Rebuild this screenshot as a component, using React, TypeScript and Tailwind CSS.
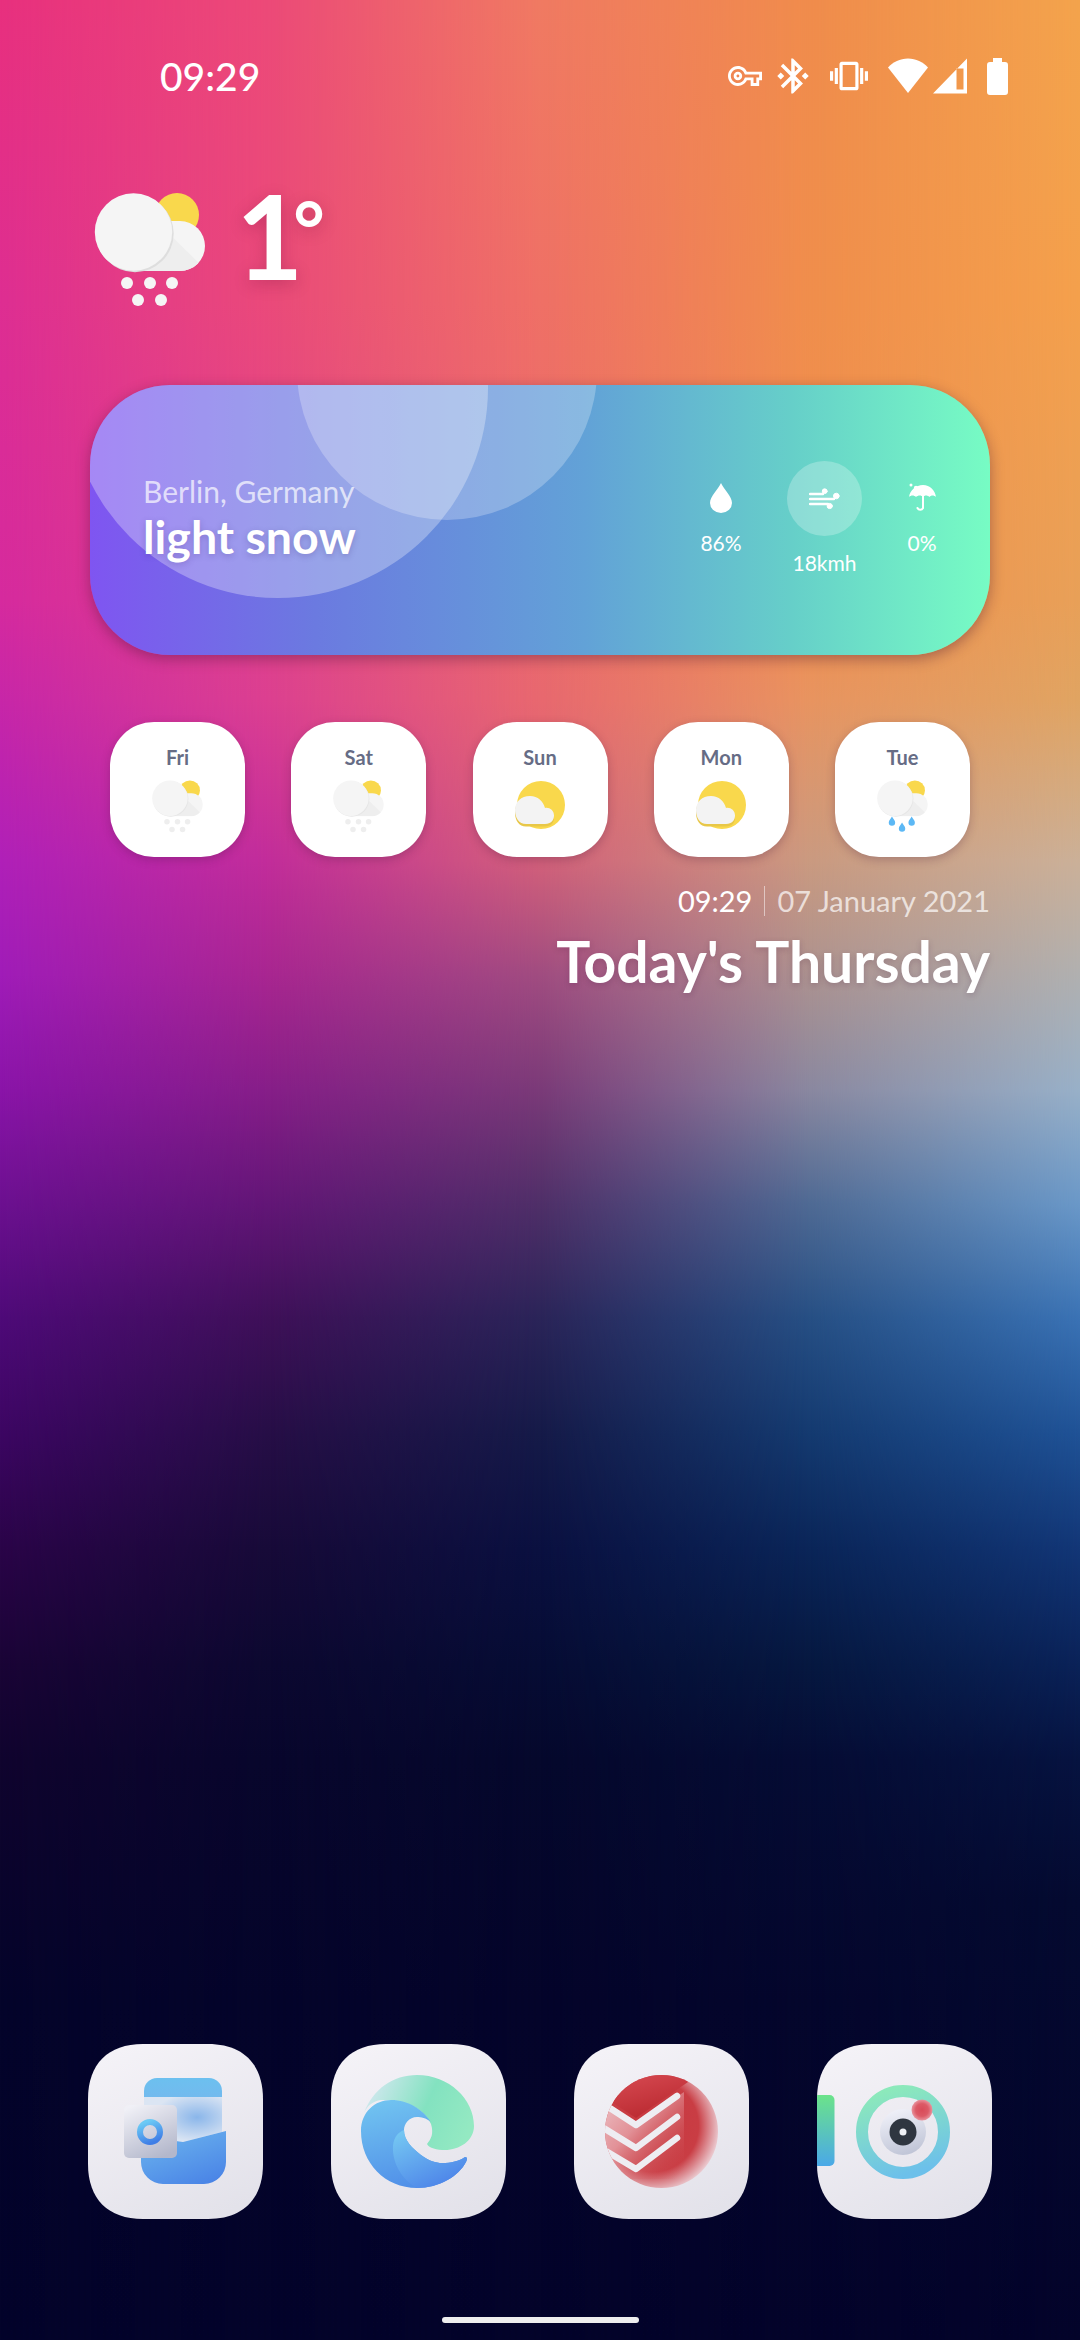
import React from "react";

function CloudIcon({ size, kind }: { size: number; kind: "main" | "snow" | "rain" }) {
  const id = kind;
  const main = kind === "main";
  const dot = main ? "#f5f5f5" : "#eeeeee";
  return (
    <svg width={size} height={size} viewBox="0 0 120 120" className="block overflow-visible">
      <defs>
        <clipPath id={`c-${id}`}>
          <path d="M43 81 H90 A25 25 0 0 0 90 31 H43 Z" />
        </clipPath>
      </defs>
      <circle cx="87" cy="25" r="22" fill="#f9d84c" />
      <path d="M43 81 H90 A25 25 0 0 0 90 31 H60 Z" fill="#f5f5f5" />
      <path d="M66 31 L112 76 L108 81 H50 Z" fill="#eeeeee" clipPath={`url(#c-${id})`} />
      <circle cx="45" cy="43.5" r="38.7" fill={main ? "#dedede" : "#e6e6e6"} />
      <circle cx="43.5" cy="42" r="38.7" fill="#f5f5f5" />
      {kind !== "rain" &&
        [[37, 93], [60, 93], [82, 93], [48, 110], [71, 110]].map(([x, y]) => (
          <circle key={`${x}-${y}`} cx={x} cy={y} r="6" fill={dot} />
        ))}
      {kind === "rain" &&
        [[37, 91], [59, 104], [80, 91]].map(([x, y]) => (
          <path key={x} d={`M${x} ${y - 9} C${x + 3} ${y - 4} ${x + 7} ${y} ${x + 7} ${y + 4} A7 7 0 0 1 ${x - 7} ${y + 4} C${x - 7} ${y} ${x - 3} ${y - 4} ${x} ${y - 9}Z`} fill="#5cb8f5" />
        ))}
    </svg>
  );
}

function SunCloud() {
  return (
    <svg width="55" height="55" viewBox="0 0 55 55" className="block">
      <circle cx="28" cy="26" r="24" fill="#f9d84c" />
      <path d="M13 47 H32 C38 47 41 43 41 38.5 C41 33 36 30 32 31 C30 24 25 17 17 17 C8 17 2 24 2 33 C2 41 6 47 13 47Z" fill="#e8c748" transform="translate(0 0.5)" />
      <path d="M13 45 H32 C38 45 41 41 41 36.5 C41 31 36 28 32 29 C30 22 25 17 17 17 C8 17 2 23 2 31 C2 39 6 45 13 45Z" fill="#f3f3f3" />
    </svg>
  );
}

const tile = "M55 0 H120 C155 0 175 20 175 55 V120 C175 155 155 175 120 175 H55 C20 175 0 155 0 120 V55 C0 20 20 0 55 0Z";

function Tile({ id, children }: { id: string; children: React.ReactNode }) {
  return (
    <svg width="175" height="175" viewBox="0 0 175 175" className="block">
      <defs>
        <linearGradient id={`t-${id}`} x1="0.25" y1="0" x2="0.7" y2="1">
          <stop offset="0" stopColor="#f4f2f7" />
          <stop offset="1" stopColor="#e3e2ea" />
        </linearGradient>
        <clipPath id={`tc-${id}`}>
          <path d={tile} />
        </clipPath>
      </defs>
      <path d={tile} fill={`url(#t-${id})`} />
      <g clipPath={`url(#tc-${id})`}>{children}</g>
    </svg>
  );
}

function Outlook() {
  return (
    <Tile id="o">
      <defs>
        <linearGradient id="o1" x1="0" y1="0" x2="0" y2="1">
          <stop offset="0" stopColor="#6cc0ef" />
          <stop offset="1" stopColor="#72baee" />
        </linearGradient>
        <linearGradient id="o2" x1="0.2" y1="0" x2="0.8" y2="1">
          <stop offset="0" stopColor="#6bb4ee" />
          <stop offset="1" stopColor="#4a84e6" />
        </linearGradient>
        <linearGradient id="o3" x1="0.2" y1="0" x2="0.7" y2="1">
          <stop offset="0" stopColor="#f0f0f6" />
          <stop offset="1" stopColor="#b3b7cb" />
        </linearGradient>
        <linearGradient id="o4" x1="0.3" y1="0" x2="0.7" y2="1">
          <stop offset="0" stopColor="#6ccaf5" />
          <stop offset="1" stopColor="#3f7de6" />
        </linearGradient>
        <radialGradient id="o5" cx="0.68" cy="0.45" r="0.55">
          <stop offset="0" stopColor="#8ab6ea" />
          <stop offset="1" stopColor="#dbe5f3" />
        </radialGradient>
      </defs>
      <path d="M56 53 H134 V88 L95 98 L56 90 Z" fill="url(#o5)" />
      <path d="M56 53 V47 A13 13 0 0 1 69 34 H121 A13 13 0 0 1 134 47 V53 Z" fill="url(#o1)" />
      <path d="M53 92 L95 98 L138 87 V118 A22 22 0 0 1 116 140 H75 A22 22 0 0 1 53 118 Z" fill="url(#o2)" />
      <rect x="36" y="61" width="53" height="53" rx="5" fill="url(#o3)" />
      <circle cx="62" cy="88" r="10" fill="none" stroke="url(#o4)" strokeWidth="6" />
    </Tile>
  );
}

function Edge() {
  return (
    <Tile id="e">
      <defs>
        <linearGradient id="e1" x1="0" y1="0.3" x2="1" y2="0.6">
          <stop offset="0" stopColor="#d3e8f0" />
          <stop offset="0.55" stopColor="#83e2c0" />
          <stop offset="1" stopColor="#94e9c2" />
        </linearGradient>
        <linearGradient id="e2" x1="0.3" y1="0" x2="0.6" y2="1">
          <stop offset="0" stopColor="#70c2f0" />
          <stop offset="1" stopColor="#4f8de8" />
        </linearGradient>
        <linearGradient id="e3" x1="0.2" y1="0" x2="0.8" y2="1">
          <stop offset="0" stopColor="#74c6f2" />
          <stop offset="1" stopColor="#4a7fe8" />
        </linearGradient>
      </defs>
      <path d="M33 69 C42 45 62 31 86 31 C118 31 143 55 143 82 C143 97 128 106 114 106 C106 106 98 104 96 100 C100 95 103 90 100 80 C92 62 70 55 50 56 C42 57 36 62 33 69Z" fill="url(#e1)" />
      <path d="M30 87 C30 68 44 56 60 56 C78 56 92 66 99.7 77.7 C95 74 90 73 86 73 C78 73 73 80 73 86 C73 96 81 104 90 111 C98 117 105 119 111 119 C120 119 128 117 134 113 C137 113 136 116 135 118 C128 132 108 144 86 144 C54 144 30 119 30 87Z" fill="url(#e2)" />
      <path d="M73 86 C73 96 81 104 90 111 C98 117 105 119 111 119 C120 119 128 117 134 113 C137 113 136 116 135 118 C128 132 108 144 86 144 C70 135 61 118 62 102 C63 92 68 88 73 86Z" fill="url(#e3)" />
    </Tile>
  );
}

function Todoist() {
  return (
    <Tile id="d">
      <defs>
        <radialGradient id="d1" cx="0.42" cy="0.45" r="0.6">
          <stop offset="0" stopColor="#c8383f" />
          <stop offset="0.68" stopColor="#c93d44" />
          <stop offset="1" stopColor="#ecd0d6" />
        </radialGradient>
        <linearGradient id="d2" x1="0" y1="0" x2="1" y2="0.9">
          <stop offset="0" stopColor="#f2d6da" stopOpacity="0.95" />
          <stop offset="0.45" stopColor="#e8a6ac" stopOpacity="0.8" />
          <stop offset="1" stopColor="#c93d44" stopOpacity="0" />
        </linearGradient>
        <linearGradient id="d3" x1="0.2" y1="0" x2="0.6" y2="1">
          <stop offset="0" stopColor="#db4f57" />
          <stop offset="1" stopColor="#b9282f" />
        </linearGradient>
        <clipPath id="d4">
          <circle cx="87.5" cy="87.5" r="56.5" />
        </clipPath>
      </defs>
      <circle cx="87.5" cy="87.5" r="56.5" fill="url(#d1)" />
      <g clipPath="url(#d4)">
        <path d="M20 50 L62 80 L110 48 V135 H20Z" fill="url(#d2)" />
        <path d="M39 59 L62 74 L114 38 L100 20 L50 20 Z" fill="url(#d3)" />
        <path d="M25 57 L62 81 L103 52 M20 78 L62 104 L103 73 M20 100 L62 125 L103 94" fill="none" stroke="#eeedf2" strokeWidth="6.5" strokeLinecap="round" strokeLinejoin="round" />
      </g>
    </Tile>
  );
}

function Camera() {
  return (
    <Tile id="c">
      <defs>
        <linearGradient id="c1" x1="0.3" y1="0" x2="0.6" y2="1">
          <stop offset="0" stopColor="#8ce9bb" />
          <stop offset="1" stopColor="#6cc0ea" />
        </linearGradient>
        <linearGradient id="c2" x1="0.3" y1="0" x2="0.6" y2="1">
          <stop offset="0" stopColor="#f0f1f9" />
          <stop offset="1" stopColor="#bfc4d6" />
        </linearGradient>
        <linearGradient id="c3" x1="0" y1="0" x2="0" y2="1">
          <stop offset="0" stopColor="#6be38a" />
          <stop offset="1" stopColor="#4aa8e8" />
        </linearGradient>
        <radialGradient id="c4">
          <stop offset="0" stopColor="#d94b58" />
          <stop offset="0.6" stopColor="#dc5a66" />
          <stop offset="1" stopColor="#e8949e" />
        </radialGradient>
      </defs>
      <path d="M-2 51 H12.5 A5 5 0 0 1 17.5 56 V117 A5 5 0 0 1 12.5 122 H-2Z" fill="url(#c3)" />
      <circle cx="86" cy="88" r="41" fill="none" stroke="url(#c1)" strokeWidth="12" />
      <circle cx="86" cy="88" r="23" fill="url(#c2)" />
      <circle cx="86" cy="88" r="13.5" fill="#2f3640" />
      <circle cx="86" cy="88" r="3.5" fill="#eef0f4" />
      <circle cx="105" cy="66" r="10.5" fill="url(#c4)" />
    </Tile>
  );
}

function Metric({ label, wide, children }: { label: string; wide?: boolean; children: React.ReactNode }) {
  return (
    <div className={wide ? "flex w-[75px] flex-col items-center" : "flex w-[60px] flex-col items-center pt-[22px]"}>
      {children}
      <div className={wide ? "mt-[12px] text-[21px] leading-[30px] text-white" : "mt-[15px] text-[21px] leading-[30px] text-white"}>{label}</div>
    </div>
  );
}

function DayCard({ day, children }: { day: string; children: React.ReactNode }) {
  return (
    <div className="flex h-[135px] w-[135px] flex-col items-center rounded-[44px] bg-white pt-[23px] shadow-[0_3px_10px_rgba(60,20,60,0.25)]">
      <div className="text-[20px] leading-[24px] font-bold text-[#666c85]">{day}</div>
      <div className="mt-[10px]">{children}</div>
    </div>
  );
}

export default function App() {
  return (
    <div className="relative flex h-[2340px] w-[1080px] flex-col overflow-hidden bg-[#03032a] font-['Lato',sans-serif]">
      <div className="absolute inset-0 bg-[linear-gradient(180deg,#e8307e_0px,#de2e92_300px,#d62a9e_600px,#b020b8_860px,#a01cb8_975px,#8a14a8_1090px,#6c1090_1204px,#4e0a78_1319px,#3c0662_1434px,#2a0448_1549px,#1a0436_1664px,#10042e_1760px,#04042a_2000px,#03032a_2340px)]" />
      <div className="absolute inset-0 bg-[linear-gradient(180deg,#ec4a78_0px,#ea4a7a_300px,#dc4090_700px,#c22d9a_860px,#a82690_975px,#861e88_1090px,#621676_1204px,#3e1058_1319px,#260e46_1434px,#170a38_1549px,#0c0830_1664px,#08062c_1760px,#04042a_2000px,#03032a_2340px)] [mask-image:linear-gradient(90deg,transparent_0%,black_25%)]" />
      <div className="absolute inset-0 bg-[linear-gradient(180deg,#f07a62_0px,#ef7066_300px,#e8686f_700px,#d2607a_860px,#a04c80_975px,#7a3a78_1090px,#4f2f68_1204px,#2a2458_1319px,#151a48_1434px,#0a1040_1549px,#060c34_1664px,#05082c_1760px,#04042a_2000px,#03032a_2340px)] [mask-image:linear-gradient(90deg,transparent_25%,black_50%)]" />
      <div className="absolute inset-0 bg-[linear-gradient(180deg,#f08c4c_0px,#f08e4c_300px,#ef8f50_600px,#e89460_700px,#ca9a80_860px,#ac9290_975px,#8a88a0_1090px,#4f6a94_1204px,#264f84_1319px,#143a70_1434px,#0a2558_1549px,#061840_1664px,#050c34_1760px,#04062c_2000px,#03032a_2340px)] [mask-image:linear-gradient(90deg,transparent_50%,black_75%)]" />
      <div className="absolute inset-0 bg-[linear-gradient(180deg,#f3a34c_0px,#f4a04c_300px,#e8a058_600px,#e0a462_700px,#cbb098_860px,#b0b0b0_975px,#98b0c8_1090px,#6a98c8_1204px,#3a72b4_1319px,#1f5296_1434px,#123676_1549px,#0a2258_1664px,#061340_1760px,#040a30_1900px,#03032a_2340px)] [mask-image:linear-gradient(90deg,transparent_75%,black_100%)]" />

      <div className="relative flex flex-1 flex-col">
        <div className="mt-[58px] flex h-[36px] items-center justify-between pr-[72px] pl-[160px] text-white">
          <div className="text-[39px] leading-[36px] font-medium">09:29</div>
          <div className="flex items-center">
            <svg width="34" height="34" viewBox="0 0 24 24" fill="white"><path d="M22 19h-6v-4h-2.68c-1.14 2.42-3.6 4-6.32 4-3.86 0-7-3.14-7-7s3.14-7 7-7c2.72 0 5.17 1.58 6.32 4H24v6h-2v4zm-4-2h2v-4h2v-2H11.94l-.23-.67C11.01 8.34 9.11 7 7 7c-2.76 0-5 2.24-5 5s2.24 5 5 5c2.11 0 4.01-1.34 4.71-3.33l.23-.67H18v4zM7 15c-1.65 0-3-1.35-3-3s1.35-3 3-3 3 1.35 3 3-1.35 3-3 3zm0-4c-.55 0-1 .45-1 1s.45 1 1 1 1-.45 1-1-.45-1-1-1z" /></svg>
            <svg width="42" height="42" viewBox="0 0 24 24" fill="white" className="ml-[10px]"><path d="M7 12l-2-2-2 2 2 2 2-2zm10.71-4.29L12 2h-1v7.59L6.41 5 5 6.41 10.59 12 5 17.59 6.41 19 11 14.41V22h1l5.71-5.71-4.3-4.29 4.3-4.29zM13 5.83l1.88 1.88L13 9.59V5.83zm1.88 10.46L13 18.17v-3.76l1.88 1.88zM19 10l-2 2 2 2 2-2-2-2z" /></svg>
            <svg width="38" height="38" viewBox="0 0 24 24" fill="white" className="ml-[16px]"><path d="M0 15h2V9H0v6zm3 2h2V7H3v10zm19-8v6h2V9h-2zm-3 8h2V7h-2v10zM16.5 3h-9C6.67 3 6 3.67 6 4.5v15c0 .83.67 1.5 1.5 1.5h9c.83 0 1.5-.67 1.5-1.5v-15c0-.83-.67-1.5-1.5-1.5zM16 19H8V5h8v14z" /></svg>
            <svg width="40" height="36" viewBox="0 0 40 36" fill="white" className="ml-[20px]"><path d="M20 35 L0 9.5 C5 4 12 0.5 20 0.5 C28 0.5 35 4 40 9.5Z" /></svg>
            <svg width="34" height="36" viewBox="0 0 34 36" fill="white" className="ml-[5px]"><path fillRule="evenodd" clipRule="evenodd" d="M0 35.5 L34 0.5 V35.5Z M23.5 10.5 V31.5 H30.5 V10.5 Z" /></svg>
            <svg width="21" height="37" viewBox="0 0 21 37" fill="white" className="ml-[20px]"><path d="M6 0 H15 V4 H18 A3 3 0 0 1 21 7 V34 A3 3 0 0 1 18 37 H3 A3 3 0 0 1 0 34 V7 A3 3 0 0 1 3 4 H6Z" /></svg>
          </div>
        </div>

        <div className="mt-[96px] flex items-start pl-[90px]">
          <CloudIcon size={120} kind="main" />
          <div className="mt-[-12px] ml-[26px] text-[116px] leading-[116px] font-bold text-white [text-shadow:0_4px_16px_rgba(120,20,60,0.3)]">
            <span className="tracking-[-10px]">1</span>
            <span className="relative top-[12px] align-top text-[76px] leading-[76px]">°</span>
          </div>
        </div>

        <div className="relative mx-[90px] mt-[75px] h-[270px] overflow-hidden rounded-[80px] bg-[linear-gradient(90deg,#7f55f1_0%,#6b7ae0_25%,#62a2d7_55%,#66cfc9_78%,#77fcc4_100%)] shadow-[0_4px_14px_rgba(70,20,50,0.4)]">
          <div className="absolute top-[-207px] left-[-22px] h-[420px] w-[420px] rounded-full bg-white/30" />
          <div className="absolute top-[-165px] left-[207px] h-[300px] w-[300px] rounded-full bg-white/25" />
          <div className="relative flex h-full justify-between">
            <div className="pt-[87px] pl-[53px]">
              <div className="text-[30px] leading-[38px] text-white/70">Berlin, Germany</div>
              <div className="mt-[1px] text-[46.5px] leading-[50px] font-bold text-white [text-shadow:0_2px_6px_rgba(60,40,120,0.25)]">light snow</div>
            </div>
            <div className="flex items-start pt-[76px] pr-[38px]">
              <Metric label="86%">
                <svg width="22" height="30" viewBox="0 0 22 30" fill="white"><path d="M11 0 C14 7 22 13 22 20 A11 10 0 0 1 0 20 C0 13 8 7 11 0Z" /></svg>
              </Metric>
              <div className="ml-[36px]">
                <Metric label="18kmh" wide>
                  <div className="flex h-[75px] w-[75px] items-center justify-center rounded-full bg-white/25">
                    <svg width="32" height="22" viewBox="0 0 32 22" fill="white" stroke="white" strokeWidth="2.4" strokeLinecap="round"><path d="M1 6 H14 M1 11 H25 M1 16 H19" fill="none" /><circle cx="15.7" cy="3.2" r="2.4" strokeWidth="1" /><circle cx="27.3" cy="8" r="2.8" strokeWidth="1" /><circle cx="20.7" cy="18" r="2.6" strokeWidth="1" /></svg>
                  </div>
                </Metric>
              </div>
              <div className="ml-[30px]">
                <Metric label="0%">
                  <svg width="28" height="30" viewBox="0 0 28 30" fill="white"><path d="M1 14 C2 7 8 2 15 2 C22 2 27 7 28 14 C26 12 23 12 21.5 14 C19.5 12 16.5 12 15 14 C13.5 12 10 12 8 14 C6 12 3 12 1 14Z" /><path d="M15 12 V25 A3 3 0 0 1 9.5 25" fill="none" stroke="white" strokeWidth="2" strokeLinecap="round" /><circle cx="3" cy="2" r="1.5" /><circle cx="8" cy="5" r="2.2" /></svg>
                </Metric>
              </div>
            </div>
          </div>
        </div>

        <div className="mx-[90px] mt-[67px] flex justify-between px-[20px]">
          <DayCard day="Fri"><CloudIcon size={55} kind="snow" /></DayCard>
          <DayCard day="Sat"><CloudIcon size={55} kind="snow" /></DayCard>
          <DayCard day="Sun"><SunCloud /></DayCard>
          <DayCard day="Mon"><SunCloud /></DayCard>
          <DayCard day="Tue"><CloudIcon size={55} kind="rain" /></DayCard>
        </div>

        <div className="mt-[28px] flex flex-col items-end pr-[90px]">
          <div className="flex h-[32px] items-center text-[29px] leading-[32px]">
            <span className="text-white">09:29</span>
            <span className="mx-[12px] h-[30px] w-px bg-white/50" />
            <span className="text-white/70">07 January 2021</span>
          </div>
          <div className="mt-[12px] text-[57px] leading-[64px] font-bold text-white [text-shadow:0_2px_6px_rgba(60,20,60,0.2)]">Today's Thursday</div>
        </div>

        <div className="mt-auto ml-[88px] flex w-[904px] justify-between self-start">
          <Outlook />
          <Edge />
          <Todoist />
          <Camera />
        </div>
        <div className="mt-[98px] mb-[17px] h-[6px] w-[197px] self-center rounded-full bg-[#eeeeee]" />
      </div>
    </div>
  );
}
